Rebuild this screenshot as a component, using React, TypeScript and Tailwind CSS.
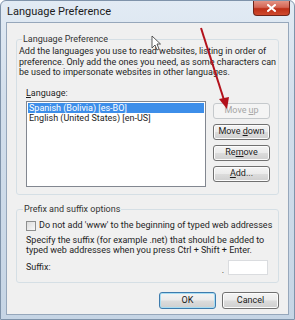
import React from "react";

const font = { fontFamily: "Roboto, 'Liberation Sans', sans-serif" };

function Btn({
  children,
  disabled,
  isDefault,
  className = "",
}: {
  children: React.ReactNode;
  disabled?: boolean;
  isDefault?: boolean;
  className?: string;
}) {
  if (disabled) {
    return (
      <div
        className={`flex items-center justify-center rounded-[3px] border border-[#c5c9cc] bg-[#f4f4f4] text-[#a6a6a6] ${className}`}
      >
        {children}
      </div>
    );
  }
  return (
    <div
      className={`flex items-center justify-center rounded-[3px] border ${
        isDefault ? "border-[#3d7bad] shadow-[inset_0_0_0_1px_#a8ddf3]" : "border-[#707070] shadow-[inset_0_0_0_1px_#fcfcfc]"
      } bg-[linear-gradient(to_bottom,#f4f4f4_0%,#ebebeb_48%,#dcdcdc_52%,#cfcfcf_100%)] text-[#1a1a1a] ${className}`}
    >
      {children}
    </div>
  );
}

export default function App() {
  return (
    <div
      className="relative w-[295px] h-[320px] overflow-hidden bg-[linear-gradient(to_bottom,#e2ebf4_0%,#d3dfec_30%,#c6d5e5_100%)] flex flex-col rounded-t-[6px] border border-[#7f93aa]"
      style={font}
    >
      {/* title bar */}
      <div className="h-[21px] flex items-start justify-between shrink-0">
        <div className="pl-[6px] pt-[5px] text-[11px] leading-[12px] text-[#1b1b1b]">Language Preference</div>
        <div className="shrink-0 mr-[4px] w-[37px] h-[15px] rounded-b-[4px] border border-t-0 border-[#6e2419] bg-[linear-gradient(to_bottom,#e39384_0%,#d46655_45%,#bd2f17_55%,#cf4a2e_100%)] flex items-center justify-center">
          <svg width="9" height="8" viewBox="0 0 9 8">
            <path d="M1 1 L8 7 M8 1 L1 7" stroke="#ffffff" strokeWidth="2" strokeLinecap="square" />
          </svg>
        </div>
      </div>

      {/* client area */}
      <div className="mx-[5px] mb-[4px] flex-1 bg-[#f0f0f0] border border-[#96a7bb] text-[9px] text-[#1e1e1e] flex flex-col pt-[11px] px-[9px]">
        {/* group 1 */}
        <fieldset className="border border-[#d5dfe5] rounded-[3px] h-[161px] px-[2px]">
          <legend className="ml-[3px] px-[1px] leading-[11px] text-[#333]">Language Preference</legend>
          <p className="leading-[10.5px] mt-[1px]">
            Add the languages you use to read websites, listing in order of preference. Only add the ones you need, as
            some characters can be used to impersonate websites in other languages.
          </p>
          <div className="pl-[7px] mt-[10px]">
            <div className="leading-[11px]">
              <span className="underline">L</span>anguage:
            </div>
            <div className="flex mt-[2px]">
              <div className="w-[180px] h-[86px] border border-[#828790] bg-white p-[1px]">
                <div className="h-[10px] bg-[#3d8ee9] text-white leading-[10px] pl-[1px]">Spanish (Bolivia) [es-BO]</div>
                <div className="h-[11px] leading-[11px] pl-[1px]">English (United States) [en-US]</div>
              </div>
              <div className="ml-[7px] flex flex-col gap-[5px] pt-[2px]">
                <Btn disabled className="w-[57px] h-[16px]">
                  Move <span className="underline ml-[2px]">u</span>p
                </Btn>
                <Btn className="w-[57px] h-[16px]">
                  Move&nbsp;<span className="underline">d</span>own
                </Btn>
                <Btn className="w-[57px] h-[16px]">
                  Re<span className="underline">m</span>ove
                </Btn>
                <Btn className="w-[57px] h-[16px]">
                  <span className="underline">A</span>dd...
                </Btn>
              </div>
            </div>
          </div>
        </fieldset>

        {/* group 2 */}
        <fieldset className="mt-[9px] border border-[#d5dfe5] rounded-[3px] h-[79px] px-[2px]">
          <legend className="ml-[4px] px-[1px] leading-[11px] text-[#333]">Prefix and suffix options</legend>
          <div className="pl-[7px]">
            <div className="flex items-center mt-[5px]">
              <div className="w-[10px] h-[10px] border border-[#8e8f8f] bg-[linear-gradient(135deg,#dcdcdc,#f8f8f8)]" />
              <span className="ml-[3px] leading-[11px]">Do not add 'www' to the beginning of typed web addresses</span>
            </div>
            <p className="mt-[5px] leading-[9.5px]">
              Specify the suffix (for example .net) that should be added to typed web addresses when you press Ctrl +
              Shift + Enter.
            </p>
            <div className="flex items-center justify-between mt-[5px] pr-[8px]">
              <span className="leading-[11px]">Suffix:</span>
              <div className="flex items-end">
                <span className="leading-[9px] mr-[4px]">.</span>
                <div className="w-[40px] h-[15px] bg-white border border-[#dadcdf]" />
              </div>
            </div>
          </div>
        </fieldset>

        {/* bottom buttons */}
        <div className="flex justify-end gap-[6px] mt-[9px]">
          <Btn isDefault className="w-[57px] h-[17px]">
            OK
          </Btn>
          <Btn className="w-[57px] h-[17px]">Cancel</Btn>
        </div>
      </div>

      {/* red annotation arrow */}
      <svg className="absolute left-0 top-0 pointer-events-none" width="295" height="320">
        <line x1="200" y1="27" x2="223" y2="99" stroke="#b3121c" strokeWidth="2" />
        <polygon points="226,108 218,98 228,96" fill="#b3121c" />
      </svg>

      {/* mouse cursor */}
      <svg className="absolute left-[150px] top-[34px] pointer-events-none" width="10" height="16" viewBox="0 0 10 16">
        <path d="M1 1 L1 13 L4 10 L6 15 L8 14 L6 9 L9.5 9 Z" fill="#ffffff" stroke="#333" strokeWidth="0.8" />
      </svg>
    </div>
  );
}
